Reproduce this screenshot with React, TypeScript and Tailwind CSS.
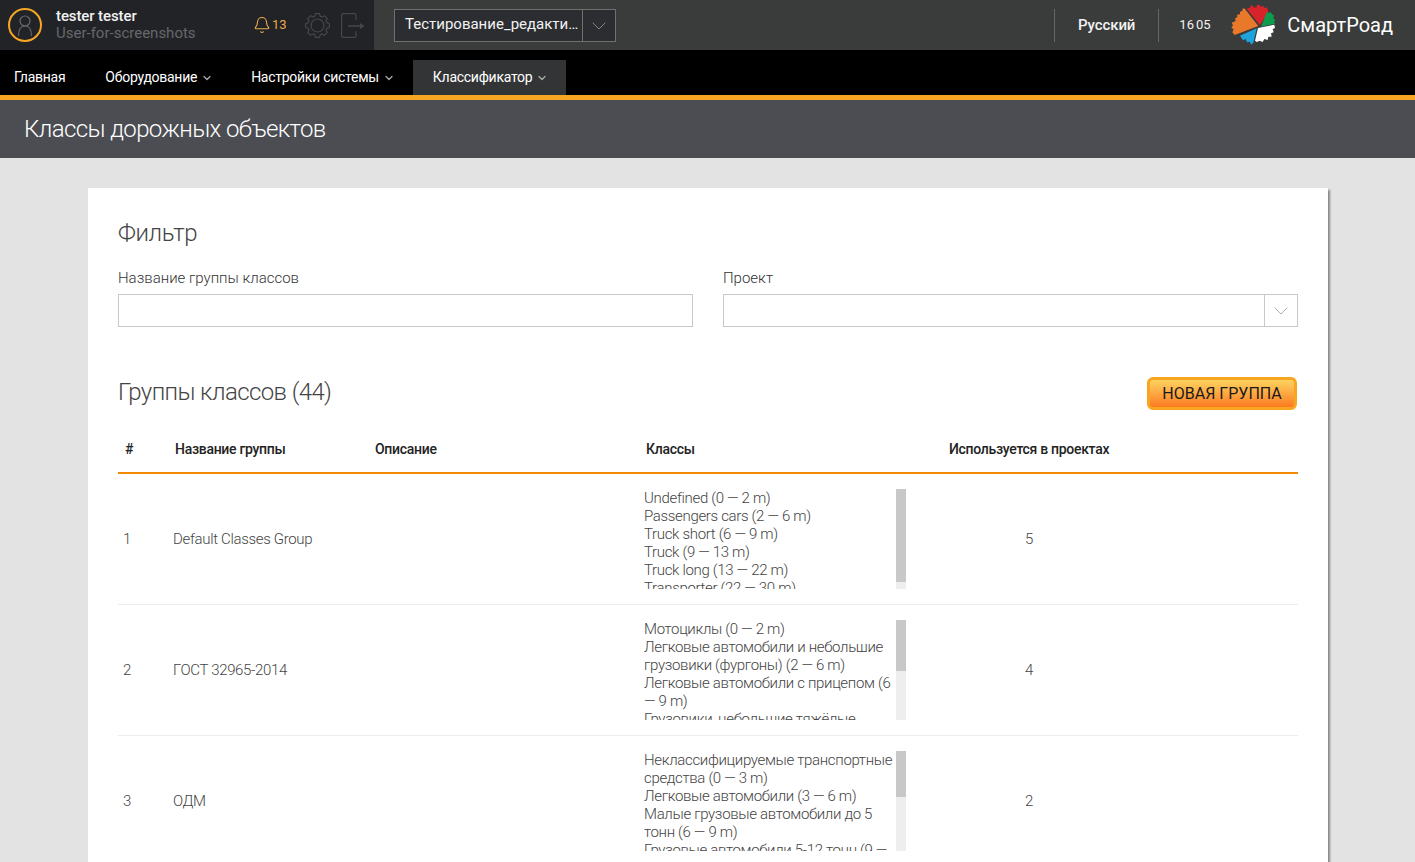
import { Bell, ChevronDown } from "lucide-react"

const groups = [
    {
        id: 1,
        name: "Default Classes Group",
        used: 5,
        thumb: "h-[93px]",
        classes: ["Undefined (0 — 2 m)", "Passengers cars (2 — 6 m)", "Truck short (6 — 9 m)", "Truck (9 — 13 m)", "Truck long (13 — 22 m)", "Transporter (22 — 30 m)"],
    },
    {
        id: 2,
        name: "ГОСТ 32965-2014",
        used: 4,
        thumb: "h-[51px]",
        classes: ["Мотоциклы (0 — 2 m)", "Легковые автомобили и небольшие грузовики (фургоны) (2 — 6 m)", "Легковые автомобили с прицепом (6 — 9 m)", "Грузовики, небольшие тяжёлые"],
    },
    {
        id: 3,
        name: "ОДМ",
        used: 2,
        thumb: "h-[46px]",
        classes: ["Неклассифицируемые транспортные средства (0 — 3 m)", "Легковые автомобили (3 — 6 m)", "Малые грузовые автомобили до 5 тонн (6 — 9 m)", "Грузовые автомобили 5-12 тонн (9 — 13 m)"],
    },
]

// viewBox is in the units of the zoomed reference, easier to trace
function Logo() {
    return (
        <svg width="46" height="50" viewBox="18 0 138 150" className="shrink-0">
            <path d="M100 78 L58 25 L52 27 L52 33 L45 35 L45 43 L36 44 L37 52 L30 55 L32 63 L20 68 L24 76 L19 83 L26 88 L22 97 L29 105 Z" fill="#e8792b" />
            <path d="M105 76 L65 26 L75 23 L76 17 L85 17 L86 23 L95 22 L95 15 L105 15 L106 20 L116 18 L117 24 L126 22 L130 36 Z" fill="#d9232a" />
            <path d="M108 80 L125 37 L132 39 L136 35 L141 43 L148 47 L144 54 L151 60 L147 66 L150 71 Z" fill="#0f9d4d" />
            <path d="M95 85 L45 107 L54 121 L62 117 L66 127 L75 125 L78 134 L85 128 Z" fill="#1da4dc" />
            <path d="M99 84 L148 74 L150 84 L143 87 L146 97 L138 100 L140 110 L130 110 L128 120 L118 117 L113 126 L104 122 L95 126 L90 122 Z" fill="#ffffff" />
        </svg>
    )
}

function UserIcon() {
    return (
        <svg width="34" height="34" viewBox="0 0 34 34" fill="none" className="shrink-0">
            <circle cx="17" cy="17" r="16" stroke="#f5a623" strokeWidth="2" />
            <circle cx="17" cy="13" r="5" stroke="#66686c" strokeWidth="1.2" />
            <path d="M10.5 28 C10.5 21 13 18 17 18 S23.5 21 23.5 28" stroke="#66686c" strokeWidth="1.2" />
        </svg>
    )
}

function GearIcon() {
    const pts: string[] = []
    for (let i = 0; i < 8; i++) {
        const a = (i * Math.PI) / 4
        for (const [r, d] of [[9.6, -0.3], [12, -0.17], [12, 0.17], [9.6, 0.3]]) {
            pts.push(`${(12.5 + r * Math.cos(a + d)).toFixed(2)},${(12.5 + r * Math.sin(a + d)).toFixed(2)}`)
        }
    }
    return (
        <svg width="25" height="25" viewBox="0 0 25 25" fill="none" stroke="#45474a" strokeWidth="1.2" className="shrink-0">
            <polygon points={pts.join(" ")} strokeLinejoin="round" />
            <circle cx="12.5" cy="12.5" r="6.5" />
        </svg>
    )
}

function ExitIcon() {
    return (
        <svg width="24" height="25" viewBox="0 0 24 25" fill="none" stroke="#45474a" strokeWidth="1.2" className="shrink-0">
            <path d="M15 7 V2 Q15 0.6 13.5 0.6 H2 Q0.6 0.6 0.6 2 V23 Q0.6 24.4 2 24.4 H13.5 Q15 24.4 15 23 V18" />
            <path d="M7 13 H20" strokeWidth="1.6" />
            <path d="M19 10 L23.5 13 L19 16 Z" fill="#45474a" stroke="none" />
        </svg>
    )
}

function Header() {
    return (
        <header className="flex h-[50px] shrink-0 bg-[#3a3b3b]">
            <div className="flex w-[374px] items-center bg-[#212327] pl-2">
                <UserIcon />
                <div className="ml-[14px] w-[197px] text-[15px] leading-[17px]">
                    <div className="font-medium tracking-[-0.1px] text-[#f2f2f2]">tester tester</div>
                    <div className="text-[#66686b]">User-for-screenshots</div>
                </div>
                <Bell size={18} strokeWidth={1.5} className="text-[#e9a94a]" />
                <span className="ml-px w-[19px] text-[13px] text-[#e9a94a]">13</span>
                <div className="ml-[14px]">
                    <GearIcon />
                </div>
                <div className="ml-[11px]">
                    <ExitIcon />
                </div>
            </div>
            <div className="ml-5 mt-[9px] flex h-[33px] w-[222px] border border-[#707070] bg-[#2b2d31]">
                <div className="flex-1 truncate pl-[10px] text-[15px] leading-[29px] text-[#f2f2f2]">Тестирование_редакти…</div>
                <div className="flex w-[33px] items-center justify-center border-l border-[#707070]">
                    <ChevronDown size={24} strokeWidth={0.8} className="text-[#9a9a9a]" />
                </div>
            </div>
            <div className="ml-auto flex items-center">
                <div className="flex h-[33px] items-center border-x border-[#666] px-[23px] text-[15px] font-medium tracking-[-0.1px] text-[#f2f2f2]">Русский</div>
                <div className="flex w-[72px] gap-[2px] pl-[20px] text-[13px] text-[#f2f2f2]">
                    <span>16</span>
                    <span>05</span>
                </div>
                <Logo />
                <div className="ml-[10px] mr-[22px] text-[20px] text-white">СмартРоад</div>
            </div>
        </header>
    )
}

function NavItem({ label, caret = true, active = false }: { label: string; caret?: boolean; active?: boolean }) {
    return (
        <div className={`flex h-[35px] items-center px-[20px] text-[14px] tracking-[-0.27px] text-white ${active ? "bg-[#333436]" : ""}`}>
            {label}
            {caret && <ChevronDown size={12} strokeWidth={2.5} className="-mr-[2px] ml-[4px] text-[#aaa]" />}
        </div>
    )
}

function Nav() {
    return (
        <nav className="flex h-[50px] shrink-0 items-end border-b-[5px] border-[#f5a623] bg-black">
            <div className="-ml-[6px] flex">
                <NavItem label="Главная" caret={false} />
                <NavItem label="Оборудование" />
                <NavItem label="Настройки системы" />
                <NavItem label="Классификатор" active />
            </div>
        </nav>
    )
}

function Filter() {
    return (
        <section>
            <h2 className="text-[24px] font-light leading-[28px] tracking-[-0.4px] text-[#444]">Фильтр</h2>
            <div className="mt-[22px] grid grid-cols-2 gap-[30px] text-[15px] font-light text-[#333]">
                <div>
                    <label className="block leading-[18px]">Название группы классов</label>
                    <div className="mt-[7px] h-[33px] border border-[#c8c8c8]" />
                </div>
                <div>
                    <label className="block leading-[18px]">Проект</label>
                    <div className="mt-[7px] flex h-[33px] justify-end border border-[#c8c8c8]">
                        <div className="flex w-[33px] items-center justify-center border-l border-[#c8c8c8]">
                            <ChevronDown size={24} strokeWidth={0.8} className="text-[#999]" />
                        </div>
                    </div>
                </div>
            </div>
        </section>
    )
}

function Row({ group }: { group: (typeof groups)[number] }) {
    return (
        <div className="flex h-[131px] items-center border-b border-[#ececec] text-[15px] font-light tracking-[-0.33px] text-[#444]">
            <div className="w-[55px] pl-[5px]">{group.id}</div>
            <div className="w-[471px]">{group.name}</div>
            <div className="flex h-[100px] w-[262px] overflow-hidden">
                <div className="w-[252px] overflow-hidden leading-[18px]">
                    {group.classes.map((c) => (
                        <div key={c}>{c}</div>
                    ))}
                </div>
                <div className="h-[100px] w-[10px] bg-[#eeeeee]">
                    <div className={`w-[10px] bg-[#c8c8c8] ${group.thumb}`} />
                </div>
            </div>
            <div className="ml-[119px]">{group.used}</div>
        </div>
    )
}

function Table() {
    return (
        <section>
            <div className="mt-[48px] flex h-[36px] items-center justify-between pr-[1px]">
                <h2 className="mb-[2px] text-[24px] font-light leading-[34px] tracking-[-0.6px] text-[#444]">Группы классов (44)</h2>
                <button className="flex h-[33px] w-[150px] items-center justify-center rounded-[6px] border-[3px] border-[#f9a51f] bg-gradient-to-b from-[#fbd25f] to-[#fb7a1e] pt-[2px] text-[16px] leading-[24px] text-[#1a1a1a]">
                    НОВАЯ ГРУППА
                </button>
            </div>
            <div className="mt-[20px] flex h-[43px] items-start border-b-2 border-[#f08a00] pt-[9px] text-[14px] font-medium leading-[18px] tracking-[-0.3px] text-[#222]">
                <div className="w-[57px] pl-[7px]">#</div>
                <div className="w-[200px]">Название группы</div>
                <div className="w-[271px]">Описание</div>
                <div className="w-[303px]">Классы</div>
                <div>Используется в проектах</div>
            </div>
            {groups.map((g) => (
                <Row key={g.id} group={g} />
            ))}
        </section>
    )
}

export default function App() {
    return (
        <div className="flex h-screen flex-col overflow-hidden bg-[#e3e3e3] font-['Roboto',sans-serif]">
            <Header />
            <Nav />
            <div className="flex h-[58px] shrink-0 items-center bg-[#4b4d52] pl-6 text-[24px] font-light tracking-[-0.6px] text-white">
                Классы дорожных объектов
            </div>
            <main className="mx-[88px] mt-[30px] w-[1240px] flex-1 bg-white px-[30px] pt-[31px] shadow-[2px_2px_2px_#888]">
                <Filter />
                <Table />
            </main>
        </div>
    )
}
